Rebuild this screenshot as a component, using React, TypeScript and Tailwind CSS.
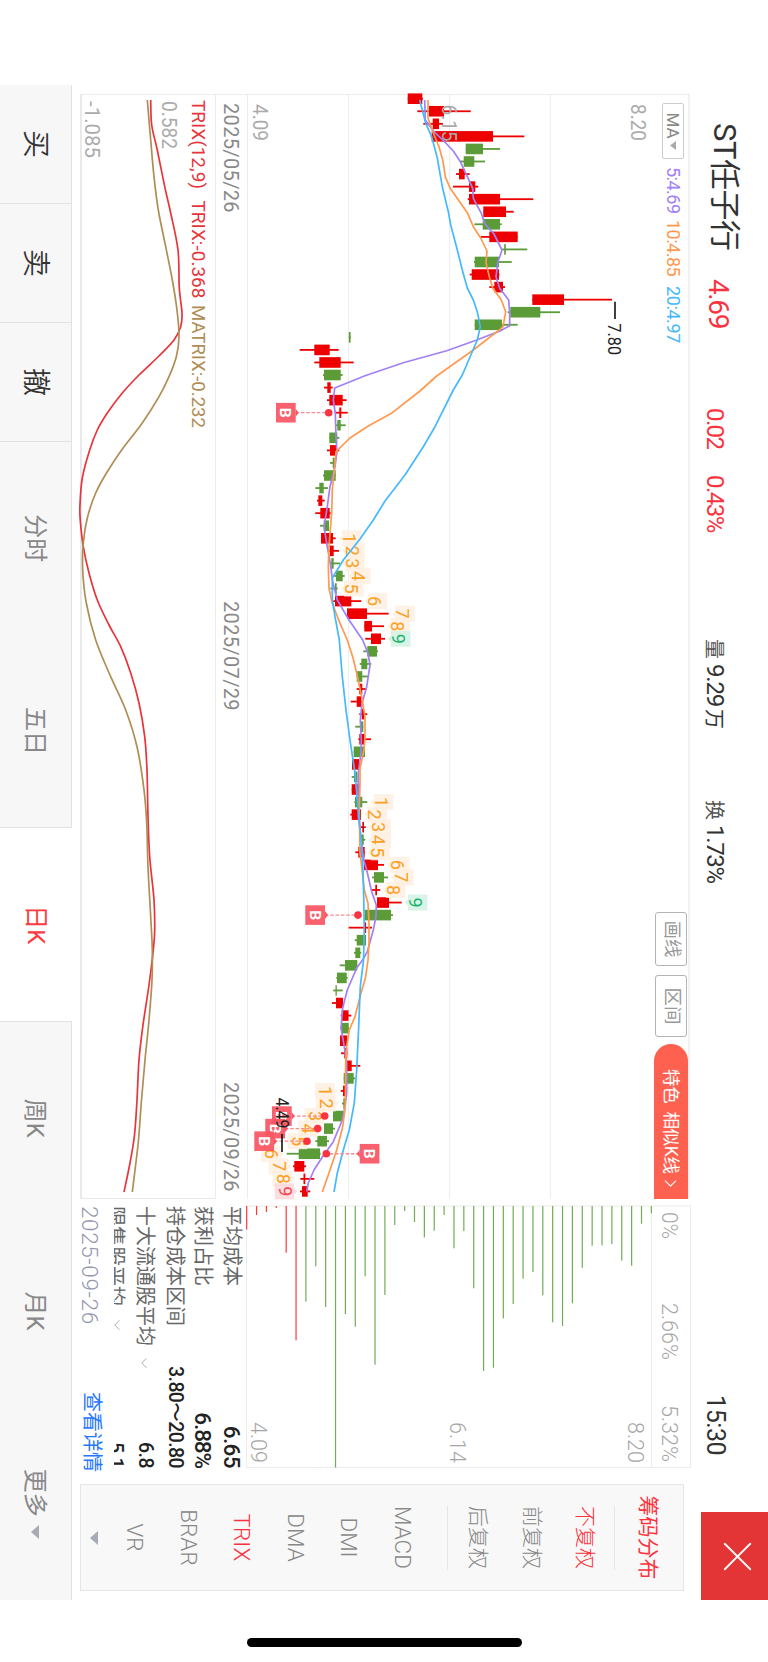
import { ChevronDown, ChevronRight, X } from "lucide-react";

const RED = "#ee0000";
const GREEN = "#5b9c39";

// [open/close low, open/close high, low, high, direction], distances from the bottom edge
type Candle = [number, number, number, number, "r" | "g"];

const candles: Candle[] = [
  [407.7, 422.3, 407.7, 423, "r"],
  [429, 444, 417.3, 470.7, "r"],
  [432.7, 439, 423.3, 443, "r"],
  [431.7, 493, 430.7, 524.3, "r"],
  [465.7, 483, 465.7, 500, "g"],
  [463.7, 474.3, 460.7, 485, "g"],
  [459, 464.7, 456, 469.7, "r"],
  [469, 475.3, 453, 478.3, "r"],
  [469, 500, 467.7, 533.3, "r"],
  [483.3, 506, 483.3, 513.7, "r"],
  [482.7, 500, 474.3, 501.7, "g"],
  [489.3, 517.7, 480.7, 517.7, "r"],
  [504.2, 505.8, 502.3, 527.3, "g"],
  [474.7, 499, 474, 511.7, "g"],
  [471.7, 499, 469.7, 499.5, "r"],
  [494.3, 503, 489.3, 505, "r"],
  [532.3, 564, 532.3, 612, "r"],
  [510.3, 540.3, 507.7, 560, "g"],
  [474.7, 502, 474.7, 517.7, "g"],
  [348.8, 350.6, 348.8, 350.6, "g"],
  [314.3, 329.7, 299.7, 338.7, "r"],
  [319.3, 340.7, 314.3, 353.7, "r"],
  [324, 340.7, 323, 342.7, "g"],
  [327.3, 330.7, 324, 332.7, "r"],
  [329.3, 342.7, 327, 346.7, "r"],
  [339.3, 341.3, 335.7, 347.7, "r"],
  [337.3, 340.7, 336, 345.7, "g"],
  [329.3, 337.3, 329.3, 339.3, "g"],
  [330, 336.7, 327, 339.3, "r"],
  [332.7, 334.7, 330, 335.7, "g"],
  [324, 335.7, 323, 335.7, "g"],
  [319.3, 323.7, 315.3, 328, "g"],
  [318.3, 322.3, 317, 324.7, "r"],
  [320.3, 329.7, 315.3, 330.7, "r"],
  [323.7, 329, 320, 329, "g"],
  [321, 333, 321, 335.7, "r"],
  [330, 333.7, 328.7, 339, "r"],
  [331.3, 333.7, 330, 340, "g"],
  [336, 342.7, 334.3, 344.7, "g"],
  [335, 336.7, 330.3, 337.7, "g"],
  [335, 351.3, 333.3, 361.3, "r"],
  [347, 367, 347, 388.7, "r"],
  [364.3, 372, 364.3, 384, "r"],
  [371, 381, 365.3, 385, "r"],
  [367.3, 377, 363.3, 378, "g"],
  [361.3, 367.3, 359.7, 371.3, "g"],
  [356.7, 362.3, 356.7, 368.7, "g"],
  [359.3, 362.3, 356.7, 366.7, "r"],
  [356.7, 361.3, 350.7, 362.7, "r"],
  [361.7, 364, 359.3, 367.3, "r"],
  [360, 363.3, 355.3, 363.3, "g"],
  [359.3, 364.7, 358.3, 371, "r"],
  [353.7, 365, 353.7, 365, "g"],
  [352, 359, 352, 359, "r"],
  [354, 357.3, 351.7, 357.3, "g"],
  [351.7, 360, 351.7, 360, "r"],
  [355, 362.3, 354.3, 367.3, "g"],
  [351.7, 361, 350.3, 361, "r"],
  [362.3, 364, 360.3, 365.7, "r"],
  [361, 363.7, 361, 365.3, "g"],
  [358.3, 364.7, 355.3, 364.7, "r"],
  [364, 378, 364, 384, "r"],
  [374, 384, 372, 388, "g"],
  [375.3, 377, 371.7, 380.3, "r"],
  [377, 389, 377, 401.7, "r"],
  [364.7, 391, 364.7, 393, "g"],
  [364.5, 366.1, 348.7, 372, "r"],
  [356.7, 366, 354.7, 366, "g"],
  [355.3, 360.3, 354, 361.3, "g"],
  [345, 357.3, 339.7, 357.3, "g"],
  [337, 346.7, 336.3, 347.7, "g"],
  [335.5, 336.8, 333.3, 342.7, "g"],
  [336, 343, 332, 343, "r"],
  [341.7, 348.5, 340.7, 351.3, "r"],
  [341.7, 348.7, 340.3, 348.7, "g"],
  [340, 347.3, 340, 347.3, "r"],
  [344.3, 347.3, 341, 347.3, "r"],
  [346.3, 351.7, 346.3, 360.3, "r"],
  [343.7, 353.7, 343.7, 355, "g"],
  [343, 346.3, 340.7, 346.3, "r"],
  [343.3, 345.7, 342, 345.7, "g"],
  [333, 343.3, 333, 343.3, "g"],
  [324, 333, 324, 335, "g"],
  [317.3, 327, 315.3, 329, "g"],
  [298.7, 320, 286.7, 320.7, "g"],
  [294.3, 304.3, 293, 306, "r"],
  [303.5, 305.3, 300.3, 314.3, "r"],
  [302, 307.7, 300, 310.3, "r"],
];

type Pt = [number, number];

const ma5: Pt[] = [
  [424.7, 100], [425.3, 120], [434, 131.7], [445.7, 143], [453.3, 151], [460.7, 162.3], [467.3, 176.7], [472.7, 188.3],
  [473.3, 198.3], [481.3, 213.3], [485, 224], [494, 234], [502, 250], [498, 261.7], [496, 276.7], [499.7, 288.3],
  [508.7, 300], [509.7, 313.3], [509.7, 325.7], [500, 331], [476.7, 340], [446.7, 350.7], [403.3, 362.7], [365, 375.7],
  [334.7, 388], [333.3, 400], [335.3, 413.3], [336, 436.7], [337, 451.7], [335, 466.7], [330, 486.7], [327.3, 506.7],
  [324, 526.7], [327.3, 546.7], [330.3, 563.3], [332.7, 581.7], [337.3, 600], [349, 620], [362.7, 640], [368, 653.3],
  [370, 665], [366.7, 686.7], [362, 703.3], [360.3, 720], [361.3, 740], [361, 753.3], [358.3, 773.3], [358, 796.7],
  [358.3, 816.7], [361.7, 843.3], [363.7, 860], [366.7, 870], [371.7, 891.7], [376.3, 905], [376, 916.7], [373.3, 930],
  [367.3, 951.7], [362.5, 960], [356.7, 968], [347.3, 990], [342.7, 1008], [341, 1028], [344.3, 1046.7], [346.7, 1063.3],
  [346.7, 1093], [345, 1106.7], [342.3, 1120], [333.3, 1141.7], [321.7, 1158], [314, 1170], [308.3, 1183], [306.7, 1191.7],
];

const ma10: Pt[] = [
  [428, 100], [428, 118], [433.3, 133], [439, 146.7], [442.7, 160], [445.3, 176.7], [450, 188], [467.3, 212.7],
  [473.3, 226.7], [480.7, 238], [487, 251], [486, 263], [489.7, 278], [492.7, 288], [501.3, 300], [505.7, 311.7],
  [503, 326.7], [500, 329.3], [473.3, 350], [436.7, 376], [420, 391], [392.3, 412.7], [368.3, 426], [350, 438],
  [336, 451.7], [334.3, 470], [332.3, 490], [331.7, 513], [330, 533.3], [329, 546.7], [328.3, 566.7], [329, 588.3],
  [332.3, 603.3], [339.3, 621.7], [347.3, 640], [352.7, 656.7], [356.7, 673.3], [361.7, 696.7], [365, 716.7], [365, 738],
  [364, 750], [360, 768.3], [360, 783.3], [359.3, 810], [360, 853], [361.7, 866.7], [364.3, 890], [368, 903.3],
  [369, 923], [369, 943], [368, 960], [365.7, 976.7], [360, 996.7], [355, 1016.7], [349.3, 1030], [346.7, 1046.7],
  [345.7, 1063], [345.3, 1106.7], [342.7, 1126.7], [336.7, 1150], [328.3, 1175], [322.3, 1192],
];

const ma20: Pt[] = [
  [419.7, 100], [425.7, 123.3], [431.7, 136.7], [437.3, 158], [442.3, 186.7], [448.3, 211.7], [450.7, 225], [457.3, 250],
  [462.3, 270], [467.3, 288], [473.3, 300], [477.3, 311.7], [480.3, 326.7], [477.3, 340], [470, 357], [462.3, 375],
  [453.3, 390], [435, 426.7], [423.3, 446.7], [405, 475], [385, 501], [373.3, 520], [360, 539], [343.3, 560],
  [332.3, 578], [332.3, 600], [335, 616.7], [339.3, 640], [342.3, 676.7], [346, 710], [350, 740], [355, 773],
  [357.3, 800], [360, 826.7], [362.7, 863], [363.7, 896.7], [364.3, 930], [363.5, 960], [360.3, 986.7], [358.7, 1026.7],
  [356.7, 1070], [354.3, 1103], [349.3, 1130], [343.3, 1150], [337.3, 1173], [334, 1192],
];

const trix: Pt[] = [
  [151.7, 100], [152.7, 125], [158.3, 150], [165.7, 186.7], [171.7, 213], [179, 250], [180.3, 288], [183, 313],
  [181.7, 326.7], [175, 340], [160, 356], [140, 375], [123.3, 393], [108.3, 413], [98.3, 430], [90.7, 450], [83.3, 478],
  [80.9, 506.7], [81.5, 523], [84.3, 546.7], [90, 573], [98.3, 600], [110, 625], [121.7, 646.7], [131.7, 673],
  [140, 703], [145.7, 736.7], [148, 770], [149, 816.7], [150.7, 856.7], [155, 900], [155.7, 930], [154.3, 950],
  [150, 985], [144, 1025], [140, 1060], [138, 1100], [135.5, 1135], [131, 1163], [125, 1192],
];

const matrix: Pt[] = [
  [148.3, 100], [151.7, 140], [155, 176.7], [159.3, 210], [166.7, 246.7], [173.3, 280], [178, 310], [180, 336.7],
  [177.3, 356.7], [170, 376.7], [160, 396.7], [143.3, 423], [123, 449.5], [108.3, 471.7], [96.7, 493], [88.3, 518],
  [84.3, 543], [83.7, 570], [87.3, 603], [96.7, 640], [111.7, 676.7], [126.7, 710], [138.3, 748], [145, 790],
  [147.7, 823], [149, 866.7], [151.7, 916.7], [153.3, 950], [153, 980], [150, 1020], [146, 1060], [142.5, 1100],
  [139.5, 1140], [136, 1170], [133.3, 1192],
];

// nine-count tags: [candle index, box start, digit, kind]
const counts: [number, number, number, "up" | "down"][] = [
  [35, 342.3, 1, "up"], [36, 345.2, 2, "up"], [37, 345, 3, "up"], [38, 351, 4, "up"], [39, 344, 5, "up"],
  [40, 367.7, 6, "up"], [41, 395.3, 7, "up"], [42, 390.3, 8, "up"], [43, 391, 9, "up"],
  [56, 374, 1, "up"], [57, 367.5, 2, "up"], [58, 371.5, 3, "up"], [59, 371.5, 4, "up"], [60, 370.5, 5, "up"],
  [61, 390, 6, "up"], [62, 394, 7, "up"], [63, 386, 8, "up"], [64, 408, 9, "up"],
  [79, 315, 1, "down"], [80, 316, 2, "down"], [81, 304.5, 3, "down"], [82, 298.3, 4, "down"], [83, 287.7, 5, "down"],
  [84, 261, 6, "down"], [85, 268.7, 7, "down"], [86, 272.7, 8, "down"], [87, 274.7, 9, "down"],
];

// buy markers: [candle index, box start, dot]
const buys: [number, number, number][] = [
  [25, 276, 328.7],
  [65, 305.3, 358],
  [81, 272, 324.7],
  [82, 265.3, 317.7],
  [83, 254.3, 307],
  [84, 359.7, 326.3],
];

const chips = [
  23.5, 9, 6, 2, 46.7, 134.3, 95.7, 60.3, 101, 261.5, 108, 120.7, 70.3, 158.7, 89, 19, 5, 16, 31.3, 24.7, 9, 42.3, 25,
  82.3, 165, 161.7, 112.3, 98, 72.7, 66, 89.3, 116.3, 120, 97.3, 61.7, 39.7, 39.3, 38, 54.7, 59.7, 17.7, 7.3,
];

const cx = (i: number) => 98.7 + i * 12.56;
const cy = (v: number) => 768 - v;
const toPoints = (pts: Pt[]) => pts.map(([v, x]) => `${x},${cy(v)}`).join(" ");

const toCurve = (pts: Pt[]) => {
  const p = pts.map(([v, x]) => [x, cy(v)]);
  let d = `M${p[0][0]} ${p[0][1]}`;
  for (let i = 0; i < p.length - 1; i++) {
    const a = p[i - 1] || p[i];
    const b = p[i];
    const c = p[i + 1];
    const e = p[i + 2] || c;
    d += `C${b[0] + (c[0] - a[0]) / 6} ${b[1] + (c[1] - a[1]) / 6} ${c[0] - (e[0] - b[0]) / 6} ${c[1] - (e[1] - b[1]) / 6} ${c[0]} ${c[1]}`;
  }
  return d;
};

interface LabelProps {
  x: number;
  y: number;
  w: number;
  size: number;
  fill: string;
  children: string;
}

const Label = ({ x, y, w, size, fill, children }: LabelProps) => (
  <text x={x} y={y} fontSize={size} fill={fill} textLength={w} lengthAdjust="spacingAndGlyphs" xmlSpace="preserve">
    {children}
  </text>
);

const Header = () => (
  <header className="flex h-[78px] items-start justify-between pl-[123px]">
    <div className="flex items-start leading-[40px] text-[#333]">
      <h1 className="w-[156px] pt-[24px] text-[31px] tracking-[-0.5px]">ST任子行</h1>
      <span className="w-[129px] pt-[30px] text-[28px] tracking-[-1.4px] text-[#fb3340]">4.69</span>
      <div className="flex items-baseline pt-[33px]">
        <span className="w-[67px] text-[24px] tracking-[-1.6px] text-[#fb3340]">0.02</span>
        <span className="w-[164px] text-[24px] tracking-[-1.5px] text-[#fb3340]">0.43%</span>
        <span className="w-[161px] text-[20px] whitespace-pre">
          <span className="text-[#555]">量</span> <span className="text-[24px] tracking-[-1.2px]">9.29</span>
          <span className="ml-[3px]">万</span>
        </span>
        <span className="w-[595px] text-[20px]">
          <span className="text-[#555]">换</span>{" "}
          <span className="text-[24px] tracking-[-1.3px]">1.73%</span>
        </span>
        <span className="text-[25px] tracking-[-0.4px]">15:30</span>
      </div>
    </div>
    <button className="mr-[62px] flex h-[67px] w-[88px] items-center justify-center bg-[#e43536] pb-2 text-white">
      <X size={51} strokeWidth={0.85} className="mt-[2px]" />
    </button>
  </header>
);

const Toolbar = () => (
  <div className="flex h-[39px] items-start justify-between border-t-2 border-[#f1f1f1] pl-[8px]">
    <div className="flex items-center pt-[4px] text-[18px] leading-[22px]">
      <button className="flex h-[22px] w-[56px] items-center justify-center gap-[2px] rounded-[2px] border border-[#ccc] text-[17px] text-[#888]">
        MA
        <svg width="9" height="6" viewBox="0 0 9 6" fill="#aaa">
          <path d="M0 0h9L4.500 6z" />
        </svg>
      </button>
      <span className="ml-[8px] w-[53px] tracking-[-0.5px] text-[#a280f5]">5:4.69</span>
      <span className="w-[66px] tracking-[-0.5px] text-[#ff9950]">10:4.85</span>
      <span className="tracking-[-0.4px] text-[#45b9fb]">20:4.97</span>
    </div>
    <div className="flex items-start text-[17.5px] text-[#999]">
      <button className="mt-[1px] mr-[9px] flex h-[32px] w-[54px] items-center justify-center rounded-[3px] border border-[#b4b4b4] text-[18.5px]">
        画线
      </button>
      <button className="mt-[1px] mr-[7px] flex h-[32px] w-[62px] items-center justify-center rounded-[3px] border border-[#b4b4b4] text-[18.5px]">
        区间
      </button>
      <button className="flex h-[34px] w-[155px] items-center rounded-l-full bg-[#ff6150] pl-[25px] whitespace-nowrap text-white">
        <span className="tracking-[-0.3px]">特色</span>
        <span className="ml-[8px] tracking-[-0.3px]">相似K线</span>
        <ChevronRight size={21} strokeWidth={1.3} className="-ml-[1px]" />
      </button>
    </div>
  </div>
);

const countColor = (digit: number, kind: string) => {
  if (digit < 9) return ["#ff9f22", "#fdf0e0"];
  return kind === "up" ? ["#19b56c", "#d3f1e4"] : ["#fb4356", "#fdd8da"];
};

const CandleChart = () => (
  <svg width="1105" height="403" viewBox="94 117 1105 403" className="block overflow-visible">
    {[217.5, 318.5, 419.5].map((y) => (
      <line key={y} x1="94" x2="1199" y1={y} y2={y} stroke="#eeeeee" />
    ))}
    {candles.map(([a, b, lo, hi, dir], i) => (
      <g key={i} fill={dir === "r" ? RED : GREEN}>
        <rect x={cx(i) - 0.9} y={cy(hi)} width="1.8" height={hi - lo} />
        <rect x={cx(i) - 5.3} y={cy(b)} width="10.6" height={b - a} />
      </g>
    ))}
    <Label x={104} y={137} w={37} size={19.5} fill="#aaa">8.20</Label>
    <Label x={104.5} y={326.5} w={37} size={19.5} fill="#aaa">6.15</Label>
    <Label x={104} y={515.5} w={37} size={19.5} fill="#aaa">4.09</Label>

    {counts.map(([i, s, digit, kind]) => {
      const [fg, bg] = countColor(digit, kind);
      const x = cx(i);
      const up = kind === "up";
      const tip = up ? cy(s) : cy(s + 19.5);
      return (
        <g key={i}>
          <rect x={x - 8} y={cy(s + 19.5)} width="16" height="19.5" fill={bg} opacity="0.85" />
          <path d={up ? `M${x - 3} ${tip}h6l-3 3z` : `M${x - 3} ${tip}h6l-3 -3z`} fill={bg} />
          <text x={x} y={cy(up ? s + 0.7 : s + 4)} fontSize="18" textAnchor="middle" fill={fg}>
            {digit}
          </text>
        </g>
      );
    })}

    <polyline points={toPoints(ma5)} fill="none" stroke="#a280f5" strokeWidth="1.7" strokeLinejoin="round" />
    <polyline points={toPoints(ma10)} fill="none" stroke="#ff9950" strokeWidth="1.7" strokeLinejoin="round" />
    <polyline points={toPoints(ma20)} fill="none" stroke="#45b9fb" strokeWidth="1.7" strokeLinejoin="round" />

    {buys.map(([i, s, dot]) => {
      const x = cx(i);
      const above = s > dot;
      const edge = above ? cy(s) : cy(s + 19.7);
      return (
        <g key={i}>
          <line
            x1={x}
            x2={x}
            y1={edge}
            y2={cy(dot)}
            stroke="#fb8a90"
            strokeWidth="1.3"
            strokeDasharray="3.5 1.8"
          />
          <circle cx={x} cy={cy(dot)} r="3.8" fill="#fb3340" />
          <rect x={x - 9.8} y={cy(s + 19.7)} width="19.6" height="19.7" fill="#f95563" opacity="0.93" />
          <path d={above ? `M${x - 4} ${edge}h8l-4 3z` : `M${x - 4} ${edge}h8l-4 -3z`} fill="#f95563" />
          <text x={x} y={cy(s + 4.3)} fontSize="15.5" fontWeight="700" textAnchor="middle" fill="#fff">
            B
          </text>
        </g>
      );
    })}

    <line x1="301.7" x2="319" y1="153" y2="153" stroke="#111" strokeWidth="1.6" />
    <Label x={323.5} y={160} w={31.5} size={18} fill="#222">7.80</Label>
    <line x1="1134" x2="1152" y1="486" y2="486" stroke="#111" strokeWidth="1.6" />
    <Label x={1097.5} y={492.5} w={31} size={18} fill="#222">4.49</Label>
  </svg>
);

const TrixChart = () => (
  <svg width="1105" height="136" viewBox="94 552 1105 136" className="block overflow-visible">
    <Label x={100} y={575.5} w={89} size={18.5} fill="#e8343a">TRIX(12,9)</Label>
    <Label x={200.5} y={575.5} w={98} size={18.5} fill="#e8343a">TRIX:-0.368</Label>
    <Label x={305} y={575.5} w={123} size={18.5} fill="#b08d55">MATRIX:-0.232</Label>
    <Label x={101} y={605} w={48} size={19.5} fill="#aaa">0.582</Label>
    <Label x={101} y={682} w={57} size={19.5} fill="#aaa">-1.085</Label>
    <path d={toCurve(trix)} fill="none" stroke="#e8343a" strokeWidth="1.7" />
    <path d={toCurve(matrix)} fill="none" stroke="#b08d55" strokeWidth="1.7" />
  </svg>
);

const ChartPanel = () => (
  <section className="w-[1105px] border-l border-[#ececec]">
    <Toolbar />
    <div className="-ml-px h-[403px]">
      <CandleChart />
    </div>
    <div className="flex h-[33px] items-center border-y border-[#ececec] pl-[8px] text-[20px] tracking-[0.35px] text-[#888]">
      <span className="w-[498px]">2025/05/26</span>
      <span className="w-[481px]">2025/07/29</span>
      <span>2025/09/26</span>
    </div>
    <div className="-ml-px h-[135px] border-r border-b-2 border-[#e9e9e9]">
      <TrixChart />
    </div>
  </section>
);

const ChipPanel = () => (
  <section className="flex h-[610px] w-[262px] flex-col">
    <svg width="262" height="444" viewBox="1206 78 262 444" className="block shrink-0 overflow-visible font-light">
      <rect x="1206" y="77.5" width="261.5" height="444" fill="none" stroke="#ececec" />
      <line x1="1206" x2="1467" y1="116.5" y2="116.5" stroke="#ececec" />
      {chips.map((len, i) => (
        <rect key={i} x="1206" y={cy(246.7 + i * 9.87) - 0.6} width={len} height="1.2" fill={i < 6 ? "#ff3838" : "#72ad55"} />
      ))}
      <Label x={1212} y={106} w={27} size={22} fill="#a6a6a6">0%</Label>
      <Label x={1303} y={106} w={57} size={22} fill="#a6a6a6">2.66%</Label>
      <Label x={1405} y={106} w={57} size={22} fill="#a6a6a6">5.32%</Label>
      <Label x={1422} y={140} w={41} size={22} fill="#a6a6a6">8.20</Label>
      <Label x={1422} y={318} w={41} size={22} fill="#a6a6a6">6.14</Label>
      <Label x={1422} y={517} w={41} size={22} fill="#a6a6a6">4.09</Label>
    </svg>
    <div className="h-[132px] shrink-0 overflow-hidden text-[20px] leading-[28.6px] text-[#666]">
      <div className="flex h-[28.6px] justify-between">
        <span>平均成本</span>
        <span className="text-[22.5px] font-medium tracking-[-0.6px] text-[#222]">6.65</span>
      </div>
      <div className="flex h-[28.6px] justify-between">
        <span>获利占比</span>
        <span className="text-[22.5px] font-medium tracking-[-1.1px] text-[#222]">6.88%</span>
      </div>
      <div className="flex h-[28.6px] justify-between">
        <span>持仓成本区间</span>
        <span className="text-[19.5px] font-medium tracking-[-0.6px] text-[#222]">3.80～20.80</span>
      </div>
      <div className="flex h-[28.6px] items-center pt-[2px]">
        <span>十大流通股平均</span>
        <ChevronDown size={18} strokeWidth={1.3} className="mt-[1px] ml-[8px] text-[#aaa]" />
        <span className="ml-auto text-[19.5px] font-medium tracking-[-0.5px] text-[#222]">6.8</span>
      </div>
      <div className="flex h-[28.6px] items-center pt-[5px]">
        <span>限售股平均</span>
        <ChevronDown size={18} strokeWidth={1.3} className="-mt-[4px] ml-[10px] text-[#aaa]" />
        <span className="ml-auto text-[19.5px] font-medium tracking-[-0.5px] text-[#222]">5.1</span>
      </div>
    </div>
    <div className="mt-[8px] flex w-[266px] shrink-0 justify-between text-[20px] leading-[28px]">
      <span className="mt-[2px] text-[22.5px] font-light tracking-[0.6px] text-[#9297ad]">2025-09-26</span>
      <span className="text-[#2676ff]">查看详情</span>
    </div>
  </section>
);

const indicators = ["MACD", "DMI", "DMA", "TRIX", "BRAR", "VR"];
const adjusts = ["不复权", "前复权", "后复权"];

const SideMenu = () => (
  <aside className="mt-[6px] ml-[16px] flex h-[604px] w-[107px] flex-col items-center border border-[#e6e6e6] bg-[#f8f8f8] text-[21px] font-light text-[#888]">
    <div className="flex h-[69px] w-[64px] items-center justify-center border-b border-[#e6e6e6] pt-[3px] font-normal whitespace-nowrap text-[#fb3340]">
      筹码分布
    </div>
    <div className="flex h-[167px] w-[64px] flex-col items-center justify-center border-b border-[#e6e6e6] whitespace-nowrap">
      {adjusts.map((name) => (
        <div
          key={name}
          className={`flex h-[53.6px] items-center ${name === "不复权" ? "text-[#fb3340]" : ""}`}
        >
          {name}
        </div>
      ))}
    </div>
    <div className="pt-[18px] text-[22.5px]">
      {indicators.map((name) => (
        <div
          key={name}
          className={`flex h-[53.6px] items-center justify-center ${name === "TRIX" ? "text-[#fb3340]" : ""}`}
        >
          {name}
        </div>
      ))}
    </div>
    <svg width="14" height="8" viewBox="0 0 14 8" fill="#a5acb5" className="mt-[9px]">
      <path d="M0 0h14L7 8z" />
    </svg>
  </aside>
);

const Footer = () => (
  <footer className="mt-[8px] ml-[85px] flex h-[72px] w-[1515px] text-[24px] text-[#888]">
    {["买", "卖", "撤"].map((name) => (
      <button
        key={name}
        className="flex w-[119px] items-center justify-center border-t border-r border-[#e2e2e2] bg-[#f7f7f7] text-[28px] font-[350] text-[#333]"
      >
        {name}
      </button>
    ))}
    {["分时", "五日", "日K", "周K", "月K", "更多"].map((name) => (
      <button
        key={name}
        className={`flex flex-1 items-center justify-center gap-[8px] ${
          name === "日K" ? "border-x border-[#e2e2e2] text-[#fb3b40]" : "border-t border-[#e2e2e2] bg-[#f7f7f7]"
        }`}
      >
        {name}
        {name === "更多" && (
          <svg width="14" height="8" viewBox="0 0 14 8" fill="#a5acb5">
            <path d="M0 0h14L7 8z" />
          </svg>
        )}
      </button>
    ))}
  </footer>
);

const App = () => {
  return (
    <div className="h-[1662px] w-[768px] overflow-hidden bg-white">
      <div className="relative flex h-[768px] w-[1662px] origin-top-left translate-x-[768px] rotate-90 flex-col font-[Roboto,'Noto_Sans_CJK_SC',sans-serif]">
        <Header />
        <main className="flex h-[610px] pl-[94px]">
          <ChartPanel />
          <div className="w-[7px]" />
          <ChipPanel />
          <SideMenu />
        </main>
        <Footer />
        <div className="absolute top-[246px] right-[15px] h-[275px] w-[9px] rounded-full bg-black" />
      </div>
    </div>
  );
};

export default App;
